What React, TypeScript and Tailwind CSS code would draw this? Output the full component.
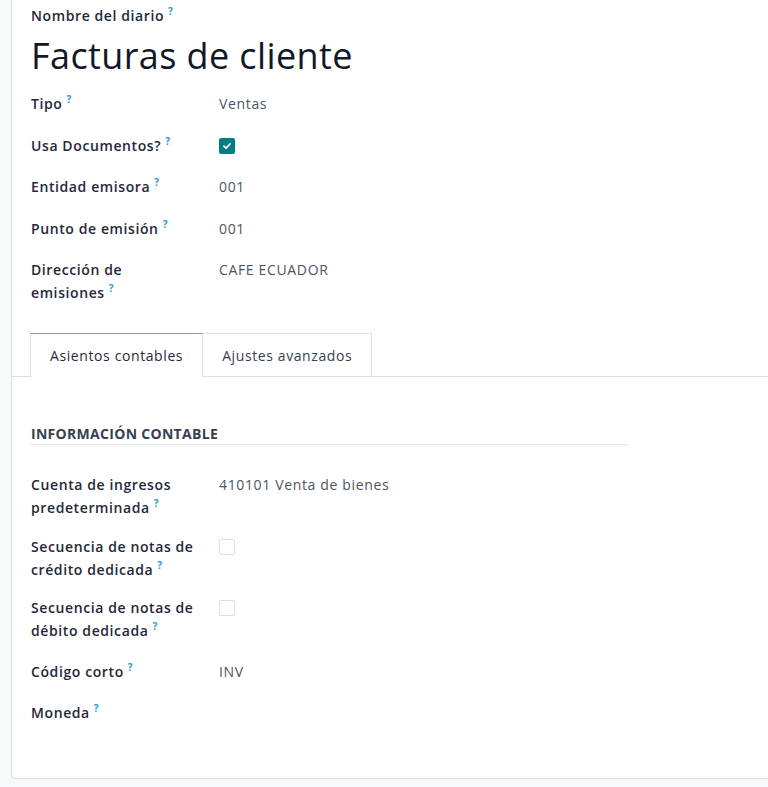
import React from 'react';

// Small help marker shown next to field labels
const Help = () => (
  <sup className="top-0 ml-[4px] align-[6px] text-[10px] font-bold leading-none tracking-normal text-[#1f9bd1]">?</sup>
);

interface FieldRowProps {
  label: string;
  height: string;
  children?: React.ReactNode;
}

const FieldRow: React.FC<FieldRowProps> = ({ label, height, children }) => (
  <div className={`flex ${height}`}>
    <div className="w-[188px] shrink-0 pr-3 text-[14px] font-semibold leading-[23.5px] tracking-[0.6px] text-[#1f2937]">
      {label}
      <Help />
    </div>
    <div className="text-[14px] leading-[23.5px] tracking-[0.65px] text-[#4b5563]">{children}</div>
  </div>
);

const CheckBox = ({ checked }: { checked?: boolean }) =>
  checked ? (
    <span className="mt-[4px] flex h-4 w-4 items-center justify-center rounded-[2px] bg-[#017e84]">
      <svg width="10" height="10" viewBox="0 0 10 10" fill="none">
        <path d="M2 5.2 4.1 7.2 8 3" stroke="white" strokeWidth="1.8" strokeLinecap="round" strokeLinejoin="round" />
      </svg>
    </span>
  ) : (
    <span className="mt-[4px] block h-4 w-4 rounded-[2px] border border-[#dcdfe3] bg-white" />
  );

export default function App() {
  return (
    <div
      className="min-h-[787px] bg-[#f8f9fa] pl-[11px]"
      style={{ fontFamily: '"Open Sans", "Noto Sans", sans-serif' }}
    >
      <div className="rounded-bl-[4px] border-b border-l border-[#dcdfe3] bg-white pb-[54px]">
        {/* Header */}
        <div className="pl-[19px] pt-[4px]">
          <div className="text-[14px] font-semibold leading-[23.5px] tracking-[0.6px] text-[#1f2937]">
            Nombre del diario
            <Help />
          </div>
          <h1 className="mt-[6px] text-[36px] leading-[43px] tracking-[0.4px] text-[#111827]">Facturas de cliente</h1>
          <div className="mt-[15px]">
            <FieldRow label="Tipo" height="h-[42px]">Ventas</FieldRow>
            <FieldRow label="Usa Documentos?" height="h-[41px]">
              <CheckBox checked />
            </FieldRow>
            <FieldRow label="Entidad emisora" height="h-[42px]">001</FieldRow>
            <FieldRow label="Punto de emisión" height="h-[41px]">001</FieldRow>
            <FieldRow label="Dirección de emisiones" height="h-[75.75px]">CAFE ECUADOR</FieldRow>
          </div>
        </div>

        {/* Tabs */}
        <div className="flex border-b border-[#dcdfe3] pl-[18px]">
          <div className="-mb-px flex h-[44px] items-center border-x border-t border-[#dcdfe3] border-t-[#a394a0] bg-white px-[19px] text-[14px] tracking-[0.6px] text-[#1f2937]">
            Asientos contables
          </div>
          <div className="flex h-[43px] items-center border-r border-t border-[#dcdfe3] px-[19px] text-[14px] tracking-[0.6px] text-[#374151]">
            Ajustes avanzados
          </div>
        </div>

        {/* Accounting info */}
        <div className="pl-[19px] pt-[45.5px]">
          <div className="w-[597px] border-b border-[#e2e4e7] text-[14px] font-bold uppercase leading-[21px] tracking-[0.3px] text-[#374151]">
            Información contable
          </div>
          <div className="mt-[27.75px]">
            <FieldRow label="Cuenta de ingresos predeterminada" height="h-[62px]">
              410101 Venta de bienes
            </FieldRow>
            <FieldRow label="Secuencia de notas de crédito dedicada" height="h-[61px]">
              <CheckBox />
            </FieldRow>
            <FieldRow label="Secuencia de notas de débito dedicada" height="h-[64px]">
              <CheckBox />
            </FieldRow>
            <FieldRow label="Código corto" height="h-[41px]">INV</FieldRow>
            <FieldRow label="Moneda" height="h-[23.5px]" />
          </div>
        </div>
      </div>
    </div>
  );
}
